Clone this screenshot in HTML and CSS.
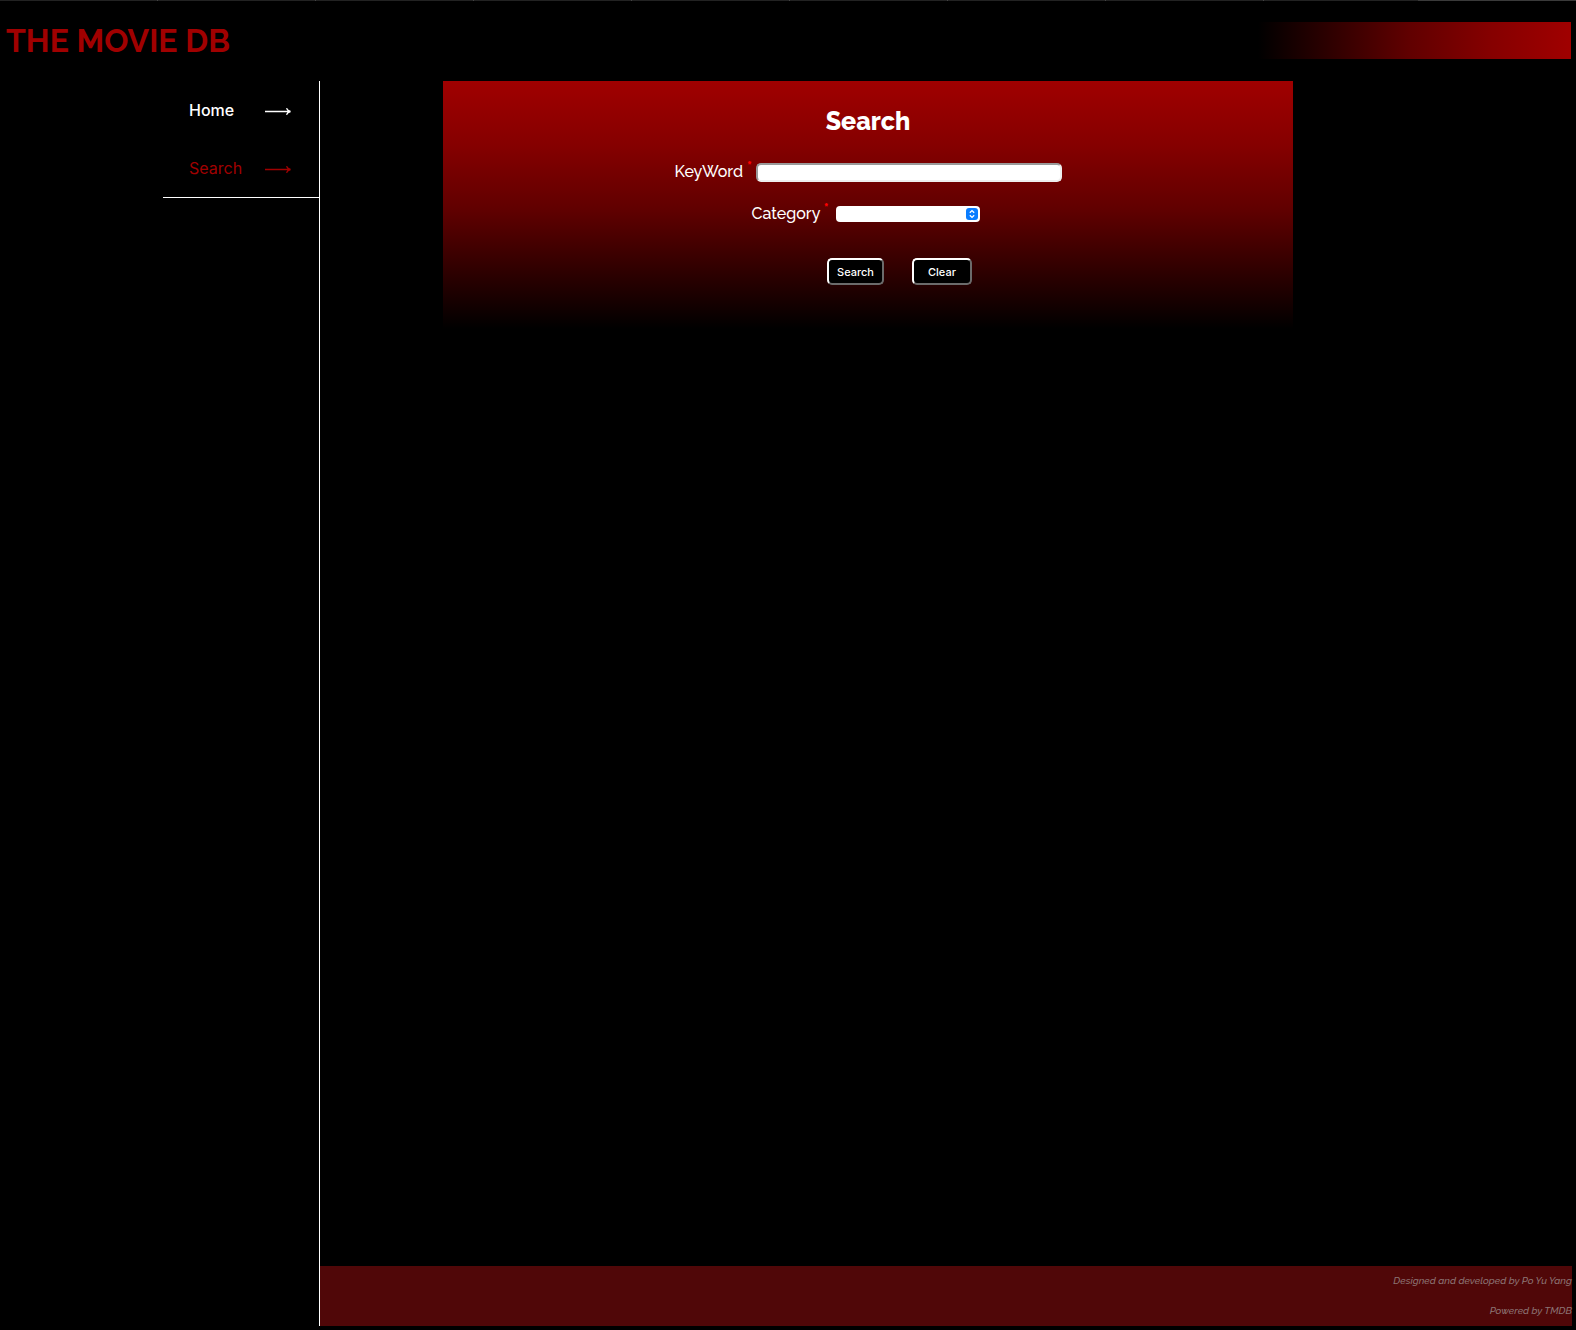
FILE: index.html
```
<!DOCTYPE html>
<html lang="en">
<head>
  <meta charset="utf-8">
  <meta name="viewport" content="width=device-width, initial-scale=1">
  <title>The Movie DB</title>
  <link rel="stylesheet" href="styles.css">
</head>
<body>
  <div class="top-line"></div>
  <header class="header">
    <h1 class="brand">THE MOVIE DB</h1>
    <div class="header-glow"></div>
  </header>
  <div class="layout">
    <aside class="sidebar">
      <nav class="nav">
        <a class="nav-link nav-link-strong" href="#home">
          <span>Home</span>
          <svg class="arrow" viewBox="0 0 26 12" aria-hidden="true"><path d="M0 7.500H25M21.500 4.200Q22.500 6.800 25.500 7.500Q22.500 8.200 21.500 10.800"/></svg>
        </a>
        <a class="nav-link nav-link-current" href="#search" aria-current="page">
          <span>Search</span>
          <svg class="arrow" viewBox="0 0 26 12" aria-hidden="true"><path d="M0 7.500H25M21.500 4.200Q22.500 6.800 25.500 7.500Q22.500 8.200 21.500 10.800"/></svg>
        </a>
      </nav>
    </aside>
    <div class="content">
      <main class="main">
        <form class="search-form">
          <h2 class="form-title">Search</h2>
          <div class="field">
            <label class="label" for="keyword">KeyWord <sup class="required">*</sup></label>
            <input class="keyword" id="keyword" type="text">
          </div>
          <div class="field field-category">
            <label class="label" for="category">Category <sup class="required">*</sup></label>
            <div class="select-box">
              <select class="category" id="category">
                <option value=""></option>
                <option value="movie">Movies</option>
                <option value="tv">TV Shows</option>
              </select>
              <svg class="select-icon" viewBox="0 0 12 12" aria-hidden="true"><rect width="12" height="12" rx="3"/><path d="M3.800 4.800L6 2.600L8.200 4.800M3.800 7.200L6 9.400L8.200 7.200"/></svg>
            </div>
          </div>
          <div class="actions">
            <button class="button" type="submit">Search</button>
            <button class="button button-clear" type="reset">Clear</button>
          </div>
        </form>
      </main>
      <footer class="footer">
        <p class="credit">Designed and developed by Po Yu Yang</p>
        <p class="credit">Powered by TMDB</p>
      </footer>
    </div>
  </div>
</body>
</html>
```
FILE: styles.css
```
* {
  box-sizing: border-box;
}

body {
  margin: 0;
  min-height: 100vh;
  display: flex;
  flex-direction: column;
  padding-bottom: 4px;
  background: #000;
  color: #fff;
  font-family: Raleway, Lato, sans-serif;
  font-size: 16px;
}

.top-line {
  height: 1px;
  background:
    linear-gradient(90deg, transparent 90%, #3a3a3a 90%),
    repeating-linear-gradient(90deg, #222 0 157px, #444 157px 158px);
}

.header {
  display: flex;
  align-items: center;
  justify-content: space-between;
  height: 80px;
  padding: 0 5px 1px 6px;
}

.brand {
  margin: 0;
  color: #a00000;
  font-size: 32px;
  line-height: 39px;
  font-weight: 700;
}

.header-glow {
  width: 20%;
  height: 37px;
  background: linear-gradient(90deg, #000, #600000 48%, #850000 74%, #a00000);
}

.layout {
  flex: 1;
  display: flex;
  padding-right: 4px;
}

.sidebar {
  width: 320px;
  border-right: 1px solid #fff;
}

.nav {
  margin-left: 163px;
  border-bottom: 1px solid #fff;
}

.nav-link {
  display: flex;
  align-items: center;
  justify-content: space-between;
  height: 58px;
  padding: 0 28px 0 26px;
  color: #fff;
  font-family: Inter, sans-serif;
  text-decoration: none;
}

.nav-link-strong {
  font-weight: 500;
}

.nav-link-current {
  color: #a00000;
}

.arrow {
  width: 26px;
  height: 12px;
  fill: none;
  stroke: currentColor;
  stroke-width: 1.3;
}

.content {
  flex: 1;
  display: flex;
  flex-direction: column;
}

.main {
  flex: 1;
  display: grid;
  grid-template-columns: 123fr 850fr 279fr;
  align-items: start;
}

.search-form {
  grid-column: 2;
  display: flex;
  flex-direction: column;
  align-items: center;
  padding: 24px 0 44px;
  background: linear-gradient(#a00000, #850000 26%, #600000 52%, #000);
}

.form-title {
  margin: 0 0 24px;
  font-size: 25px;
  line-height: 32px;
  font-weight: 800;
}

.field {
  display: flex;
  align-items: center;
  gap: 4px;
  height: 22px;
}

.field-category {
  gap: 8px;
  margin: 20px 4px 0 0;
}

.label {
  font-weight: 500;
  line-height: 20px;
}

.required {
  color: #f00;
  font-size: 12px;
  line-height: 0;
  font-weight: 900;
}

.keyword {
  width: 306px;
  height: 19px;
  padding: 0 4px;
  border: 2px inset #eee;
  border-radius: 5px;
  background: #fff;
}

.select-box {
  display: grid;
  align-items: center;
}

.category,
.select-icon {
  grid-area: 1 / 1;
}

.category {
  appearance: none;
  width: 144px;
  height: 16px;
  padding: 0 20px 0 6px;
  border: 0;
  border-radius: 4px;
  background: #fff;
  font-size: 11px;
}

.select-icon {
  justify-self: end;
  width: 12px;
  height: 12px;
  margin-right: 2px;
  fill: #0a7dff;
  stroke: #fff;
  stroke-width: 0;
  pointer-events: none;
}

.select-icon path {
  fill: none;
  stroke-width: 1.3;
}

.actions {
  display: flex;
  gap: 28px;
  margin: 33px 0 0 63px;
}

.button {
  width: 57px;
  height: 27px;
  padding: 0;
  border: 2px solid;
  border-color: #fff #6b6b6b #6b6b6b #fff;
  border-radius: 5px;
  background: #000;
  color: #fff;
  font-family: Inter, sans-serif;
  font-size: 11px;
  font-weight: 500;
}

.button-clear {
  width: 60px;
}

.footer {
  background: #500708;
  text-align: right;
}

.credit {
  margin: 0;
  color: #8c7474;
  font-size: 10px;
  line-height: 30px;
  font-style: italic;
  font-weight: 500;
}
```
